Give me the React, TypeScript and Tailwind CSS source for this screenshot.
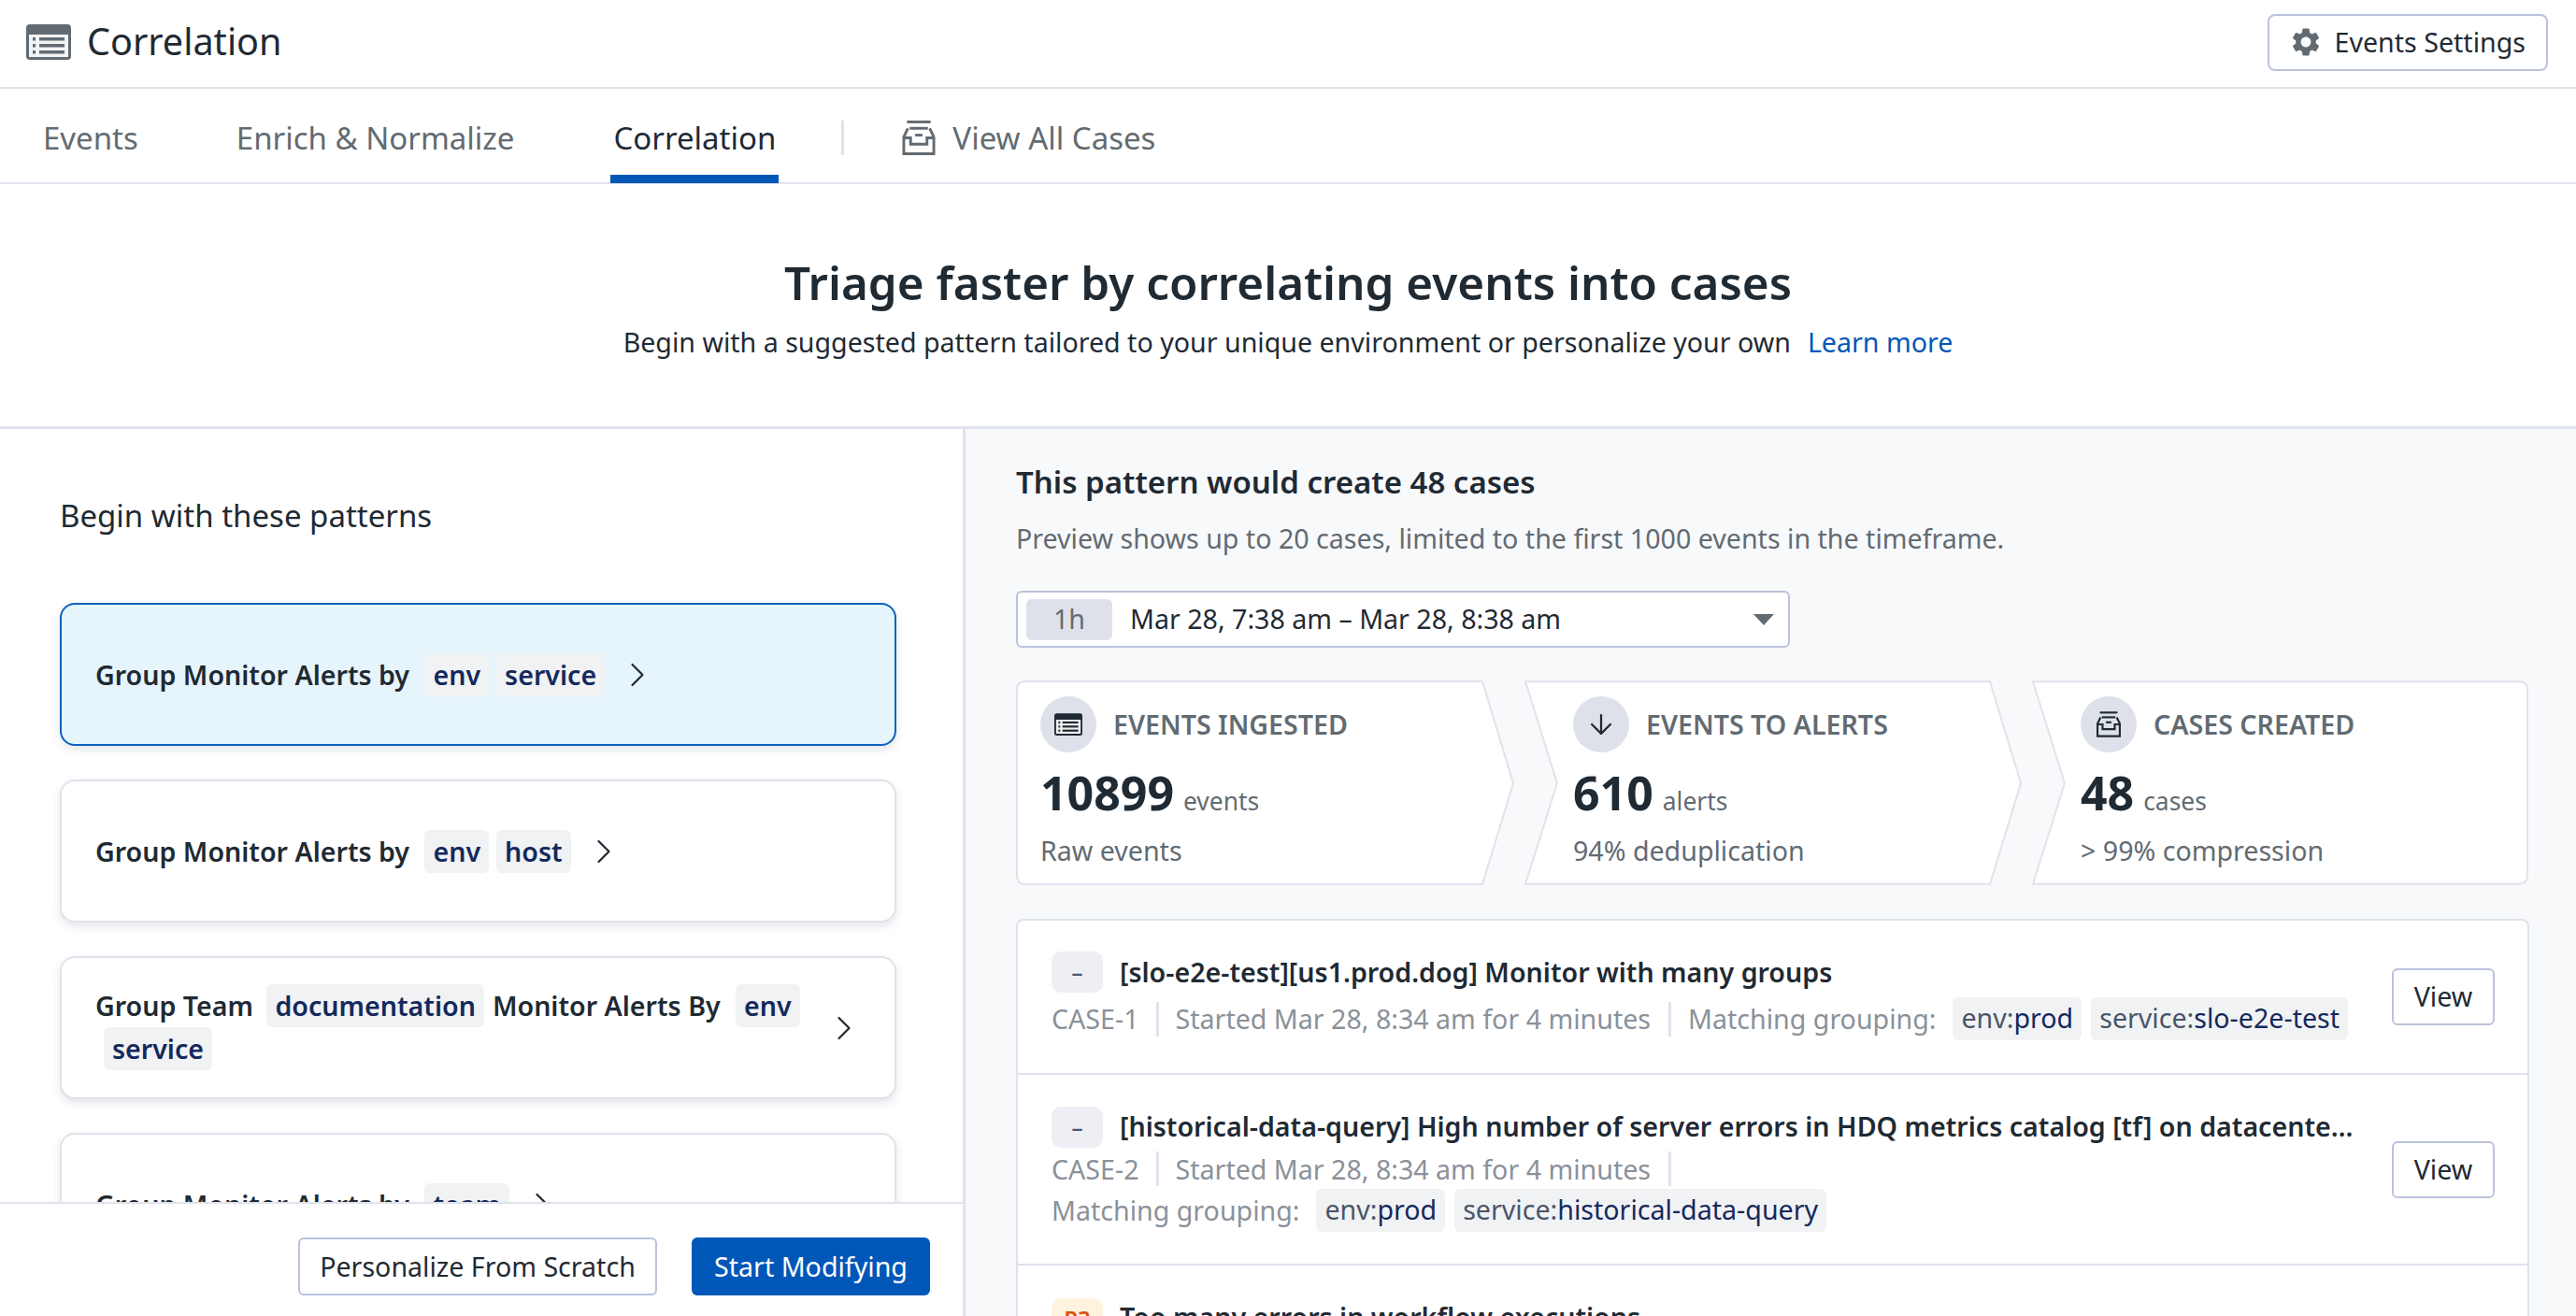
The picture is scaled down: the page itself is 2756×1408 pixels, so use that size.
import { ArrowDown, ChevronRight } from "lucide-react";
import { MdSettings } from "react-icons/md";

const EventsIcon = ({ className }: { className: string }) => (
  <svg viewBox="0 0 48 38" className={className}>
    <rect x="0" y="0" width="48" height="38" rx="4" fill="currentColor" />
    <rect x="3" y="11" width="42" height="24" fill="#fff" opacity="0.92" />
    <rect x="7" y="14" width="3" height="3.5" fill="currentColor" />
    <rect x="7" y="21" width="3" height="3.5" fill="currentColor" />
    <rect x="7" y="28" width="3" height="3.5" fill="currentColor" />
    <rect x="14" y="14" width="27" height="3.5" fill="currentColor" />
    <rect x="14" y="21" width="27" height="3.5" fill="currentColor" />
    <rect x="14" y="28" width="27" height="3.5" fill="currentColor" />
  </svg>
);

const CasesIcon = ({ className }: { className: string }) => (
  <svg viewBox="0 0 36 38" fill="none" stroke="currentColor" strokeWidth="3" className={className}>
    <path d="M5 1.5h26" />
    <path d="M8 8.5h20" />
    <path d="M6 8.5 1.5 18v18.500h33V18L30 8.500" />
    <path d="M1.500 19h7.500v7h18v-7h7.500" />
    <path d="M14 16h8" />
  </svg>
);

const Tag = ({ children, className = "" }: { children: React.ReactNode; className?: string }) => (
  <span className={`inline-block mx-[4px] px-[9px] h-[46px] leading-[46px] rounded-[6px] bg-[#f1f2f4] text-[#14295c] ${className}`}>
    {children}
  </span>
);

const Chevron = ({ className }: { className: string }) => (
  <ChevronRight size={44} strokeWidth={1.2} className={className} />
);

const PatternCard = ({ active, children }: { active?: boolean; children: React.ReactNode }) => (
  <div
    className={`flex items-center shrink-0 h-[153px] mb-[36px] pl-[36px] pr-[40px] rounded-[16px] border-2 shadow-[0_4px_10px_rgba(30,40,70,0.12)] ${
      active ? "border-[#0b62bd] bg-[#e6f4fc]" : "border-[#e0e2ec] bg-white"
    }`}
  >
    {children}
  </div>
);

const Stat = ({
  width,
  pad,
  first,
  last,
  icon,
  title,
  value,
  unit,
  note,
}: {
  width: string;
  pad: string;
  first?: boolean;
  last?: boolean;
  icon: React.ReactNode;
  title: string;
  value: string;
  unit: string;
  note: string;
}) => {
  const notch = first ? 0 : 35;
  const right = last ? 532 : 499;
  const tip = last ? 532 : 532;
  const outline = first
    ? `M10 1H${right}L${tip} 110L${right} 218H10Q1 218 1 209V10Q1 1 10 1Z`
    : last
      ? `M1 1H522Q531 1 531 10V209Q531 218 522 218H1L${notch} 110Z`
      : `M1 1H${right}L${tip} 110L${right} 218H1L${notch} 110Z`;
  return (
    <div className={`relative h-[219px] shrink-0 ${width} ${pad}`}>
      <svg viewBox="0 0 533 219" className="absolute inset-0 w-full h-full">
        <path d={outline} fill="#fff" stroke="#e0e2ec" strokeWidth="2" />
      </svg>
      <div className="relative">
        <div className="flex items-center gap-[18px] pt-[17px] h-[77px]">
          <div className="flex items-center justify-center w-[60px] h-[60px] rounded-full bg-[#dfe1ea] text-[#1f2a33]">
            {icon}
          </div>
          <span className="text-[28.6px] font-semibold text-[#626b72]">{title}</span>
        </div>
        <div className="flex items-baseline gap-[10px] mt-[12px] h-[62px]">
          <span className="text-[50px] leading-[62px] font-bold text-[#1f2a33]">{value}</span>
          <span className="text-[26.4px] text-[#626b72]">{unit}</span>
        </div>
        <div className="mt-[11px] text-[28.6px] leading-[40px] text-[#626b72]">{note}</div>
      </div>
    </div>
  );
};

const Divider = ({ className = "" }: { className?: string }) => (
  <span className={`w-[3px] h-[37px] bg-[#e0e2ec] ${className}`} />
);

const MetaTag = ({ name, value }: { name: string; value: string }) => (
  <span className="inline-block h-[46px] leading-[44px] px-[9px] rounded-[6px] bg-[#f1f2f4] text-[#4a5568]">
    {name}:<span className="text-[#14295c]">{value}</span>
  </span>
);

const Priority = ({ label, warn }: { label: string; warn?: boolean }) => (
  <span
    className={`flex items-center justify-center shrink-0 w-[55px] h-[44px] rounded-[10px] text-[24px] font-semibold ${
      warn ? "bg-[#fff3de] text-[#d9520e]" : "bg-[#eeeff4] text-[#4a5578]"
    }`}
  >
    {label}
  </span>
);

const ViewButton = () => (
  <button className="shrink-0 w-[110px] h-[61px] rounded-[6px] border-2 border-[#bcc2dc] bg-white text-[28.6px] text-[#1f2a33]">
    View
  </button>
);

export default function App() {
  return (
    <div className="h-[1408px] w-full overflow-hidden bg-white text-[#1f2a33] font-['Noto_Sans',sans-serif]">
      {/* top bar */}
      <header className="flex items-center justify-between h-[95px] pl-[28px] pr-[30px] border-b-2 border-[#e0e2ec]">
        <div className="flex items-center gap-[17px] -mt-[3px]">
          <EventsIcon className="w-[48px] h-[38px] text-[#626b72]" />
          <span className="text-[39.6px] leading-none">Correlation</span>
        </div>
        <button className="flex items-center gap-[13px] h-[61px] -mt-[3px] pl-[21px] pr-[22px] rounded-[8px] border-2 border-[#bcc2dc] text-[28.6px]">
          <MdSettings size={36} className="text-[#626b72]" />
          Events Settings
        </button>
      </header>

      {/* tabs */}
      <nav className="flex items-center h-[102px] pt-[5px] pl-[46px] border-b-2 border-[#e0e2ec] text-[33px] text-[#626b72]">
        <span>Events</span>
        <span className="ml-[105px]">Enrich &amp; Normalize</span>
        <span className="relative ml-[106px] text-[#1f2a33]">
          Correlation
          <span className="absolute -left-[3px] -right-[3px] top-[64px] h-[9px] bg-[#0057b8]" />
        </span>
        <span className="ml-[70px] w-[3px] h-[37px] bg-[#e0e2ec]" />
        <CasesIcon className="ml-[62px] w-[36px] h-[37px] text-[#626b72]" />
        <span className="ml-[18px]">View All Cases</span>
      </nav>

      {/* hero */}
      <section className="flex flex-col items-center h-[262px] pt-[70px] border-b-[3px] border-[#e0e2ec]">
        <h1 className="text-[49.4px] leading-[70px] font-semibold">Triage faster by correlating events into cases</h1>
        <p className="mt-[7px] text-[28.6px] leading-[44px]">
          Begin with a suggested pattern tailored to your unique environment or personalize your own
          <a className="ml-[18px] text-[#0057b8]">Learn more</a>
        </p>
      </section>

      <div className="flex h-[950px]">
        {/* left column */}
        <aside className="flex flex-col w-[1033px] shrink-0 border-r-[3px] border-[#e0e2ec]">
          <div className="flex-1 overflow-hidden pl-[64px] pr-[71px] pt-[70px]">
            <h2 className="h-[116px] text-[33px] leading-[46px]">Begin with these patterns</h2>
            <div className="flex flex-col text-[28.6px] leading-[46px] font-semibold">
              <PatternCard active>
                <div>Group Monitor Alerts by <Tag className="ml-[9px]">env</Tag><Tag>service</Tag></div>
                <Chevron className="ml-[9px]" />
              </PatternCard>
              <PatternCard>
                <div>Group Monitor Alerts by <Tag className="ml-[9px]">env</Tag><Tag>host</Tag></div>
                <Chevron className="ml-[9px]" />
              </PatternCard>
              <PatternCard>
                <div className="flex-1 -mt-[2px]">
                  Group Team <Tag className="ml-[7px] mr-[9px]">documentation</Tag>Monitor Alerts By <Tag className="ml-[9px]">env</Tag><Tag className="ml-[9px]">service</Tag>
                </div>
                <Chevron className="-mr-[8px]" />
              </PatternCard>
              <PatternCard>
                <div>Group Monitor Alerts by <Tag className="ml-[9px]">team</Tag></div>
                <Chevron className="ml-[9px]" />
              </PatternCard>
            </div>
          </div>
          <div className="flex justify-end gap-[37px] h-[123px] pt-[36px] pr-[35px] border-t-2 border-[#e0e2ec] bg-white">
            <button className="w-[384px] h-[62px] rounded-[6px] border-2 border-[#bcc2dc] text-[28.6px]">
              Personalize From Scratch
            </button>
            <button className="w-[255px] h-[62px] rounded-[6px] bg-[#0057b8] text-white text-[28.6px]">
              Start Modifying
            </button>
          </div>
        </aside>

        {/* right column */}
        <main className="flex-1 overflow-hidden bg-[#f8f9fb] pl-[54px] pr-[50px] pt-[34px]">
          <h2 className="text-[33px] leading-[46px] font-semibold">This pattern would create 48 cases</h2>
          <p className="mt-[14px] text-[28.6px] leading-[46px] text-[#626b72]">
            Preview shows up to 20 cases, limited to the first 1000 events in the timeframe.
          </p>
          <div className="flex items-center w-[828px] h-[61px] mt-[33px] pl-[9px] pr-[15px] rounded-[6px] border-2 border-[#bcc2dc] bg-white text-[28.6px]">
            <span className="flex items-center justify-center w-[92px] h-[44px] rounded-[6px] bg-[#dfe1ea] text-[#626b72]">1h</span>
            <span className="flex-1 ml-[19px]">Mar 28, 7:38 am – Mar 28, 8:38 am</span>
            <span className="w-0 h-0 border-x-[11px] border-t-[12px] border-x-transparent border-t-[#626b72]" />
          </div>

          <div className="flex gap-[11px] mt-[35px]">
            <Stat
              first
              width="w-[533px]"
              pad="pl-[26px]"
              icon={<EventsIcon className="w-[30px] h-[24px]" />}
              title="EVENTS INGESTED"
              value="10899"
              unit="events"
              note="Raw events"
            />
            <Stat
              width="w-[532px]"
              pad="pl-[52px]"
              icon={<ArrowDown size={34} strokeWidth={1.6} />}
              title="EVENTS TO ALERTS"
              value="610"
              unit="alerts"
              note="94% deduplication"
            />
            <Stat
              last
              width="w-[532px]"
              pad="pl-[52px]"
              icon={<CasesIcon className="w-[26px] h-[28px]" />}
              title="CASES CREATED"
              value="48"
              unit="cases"
              note="> 99% compression"
            />
          </div>

          {/* case list */}
          <div className="mt-[36px] h-[460px] overflow-hidden rounded-t-[8px] border-x-2 border-t-2 border-[#e0e2ec] bg-white">
            <div className="flex items-center h-[165px] pl-[36px] pr-[35px] border-b-2 border-[#e0e2ec]">
              <div className="flex-1 min-w-0">
                <div className="flex items-center gap-[18px] -mt-[2px]">
                  <Priority label="–" />
                  <span className="text-[28.6px] font-semibold">[slo-e2e-test][us1.prod.dog] Monitor with many groups</span>
                </div>
                <div className="flex items-center mt-[5px] text-[28.6px] text-[#8a9199]">
                  <span>CASE-1</span>
                  <Divider className="ml-[18px]" />
                  <span className="ml-[18px]">Started Mar 28, 8:34 am for 4 minutes</span>
                  <Divider className="ml-[19px]" />
                  <span className="ml-[18px]">Matching grouping:</span>
                  <span className="flex gap-[10px] ml-[18px]">
                    <MetaTag name="env" value="prod" />
                    <MetaTag name="service" value="slo-e2e-test" />
                  </span>
                </div>
              </div>
              <ViewButton />
            </div>
            <div className="flex items-center h-[204px] pl-[36px] pr-[35px] border-b-2 border-[#e0e2ec]">
              <div className="flex-1 min-w-0">
                <div className="flex items-center gap-[18px] w-[1400px]">
                  <Priority label="–" />
                  <span className="truncate text-[28.6px] font-semibold">
                    [historical-data-query] High number of server errors in HDQ metrics catalog [tf] on datacenter us1.prod.dog
                  </span>
                </div>
                <div className="flex items-center mt-[2px] text-[28.6px] text-[#8a9199]">
                  <span>CASE-2</span>
                  <Divider className="ml-[18px]" />
                  <span className="ml-[18px]">Started Mar 28, 8:34 am for 4 minutes</span>
                  <Divider className="ml-[19px]" />
                </div>
                <div className="flex items-center text-[28.6px] text-[#8a9199]">
                  <span>Matching grouping:</span>
                  <span className="flex gap-[10px] ml-[18px]">
                    <MetaTag name="env" value="prod" />
                    <MetaTag name="service" value="historical-data-query" />
                  </span>
                </div>
              </div>
              <ViewButton />
            </div>
            <div className="flex items-start pt-[35px] pl-[36px]">
              <div className="flex items-center gap-[18px]">
                <Priority warn label="P3" />
                <span className="-mt-[3px] text-[28.6px] font-semibold">Too many errors in workflow executions</span>
              </div>
            </div>
          </div>
        </main>
      </div>
    </div>
  );
}
